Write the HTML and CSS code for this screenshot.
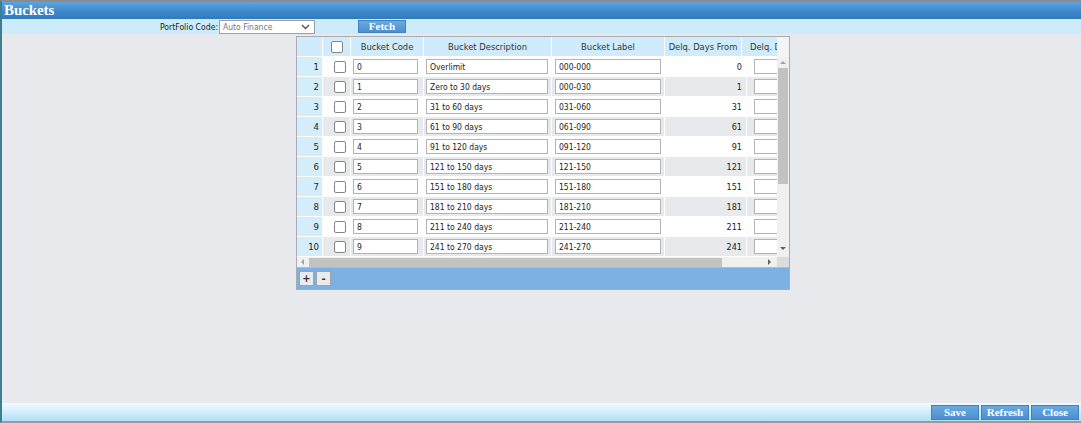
FILE: index.html
```html
<!DOCTYPE html>
<html>
<head>
<meta charset="utf-8">
<link rel="stylesheet" href="styles.css">
</head>
<body>
<div class="window">
  <div class="titlebar">Buckets</div>
  <div class="toolbar">
    <label class="tb-label">PortFolio Code:</label>
    <div class="select"><span>Auto Finance</span>
      <svg class="chev" width="9" height="6" viewBox="0 0 9 6"><path d="M1 1 L4.5 4.5 L8 1" fill="none" stroke="#555" stroke-width="1.4"/></svg>
    </div>
    <button class="btn fetch">Fetch</button>
  </div>
  <div class="content">
    <div class="grid">
      <div class="view">
        <div class="tablearea">
          <div class="row head">
            <div class="c rn"></div>
            <div class="c cb"><span class="chk"></span></div>
            <div class="c code">Bucket Code</div>
            <div class="c desc">Bucket Description</div>
            <div class="c lbl">Bucket Label</div>
            <div class="c from">Delq. Days From</div>
            <div class="c to">Delq. Days To</div>
          </div>
          <div class="body">
            <div class="row">
              <div class="c rn">1</div><div class="c cb"><span class="chk"></span></div>
              <div class="c code"><input class="inp" value="0"></div>
              <div class="c desc"><input class="inp" value="Overlimit"></div>
              <div class="c lbl"><input class="inp" value="000-000"></div>
              <div class="c from">0</div><div class="c to"><input class="inp"></div>
            </div>
            <div class="row alt">
              <div class="c rn">2</div><div class="c cb"><span class="chk"></span></div>
              <div class="c code"><input class="inp" value="1"></div>
              <div class="c desc"><input class="inp" value="Zero to 30 days"></div>
              <div class="c lbl"><input class="inp" value="000-030"></div>
              <div class="c from">1</div><div class="c to"><input class="inp"></div>
            </div>
            <div class="row">
              <div class="c rn">3</div><div class="c cb"><span class="chk"></span></div>
              <div class="c code"><input class="inp" value="2"></div>
              <div class="c desc"><input class="inp" value="31 to 60 days"></div>
              <div class="c lbl"><input class="inp" value="031-060"></div>
              <div class="c from">31</div><div class="c to"><input class="inp"></div>
            </div>
            <div class="row alt">
              <div class="c rn">4</div><div class="c cb"><span class="chk"></span></div>
              <div class="c code"><input class="inp" value="3"></div>
              <div class="c desc"><input class="inp" value="61 to 90 days"></div>
              <div class="c lbl"><input class="inp" value="061-090"></div>
              <div class="c from">61</div><div class="c to"><input class="inp"></div>
            </div>
            <div class="row">
              <div class="c rn">5</div><div class="c cb"><span class="chk"></span></div>
              <div class="c code"><input class="inp" value="4"></div>
              <div class="c desc"><input class="inp" value="91 to 120 days"></div>
              <div class="c lbl"><input class="inp" value="091-120"></div>
              <div class="c from">91</div><div class="c to"><input class="inp"></div>
            </div>
            <div class="row alt">
              <div class="c rn">6</div><div class="c cb"><span class="chk"></span></div>
              <div class="c code"><input class="inp" value="5"></div>
              <div class="c desc"><input class="inp" value="121 to 150 days"></div>
              <div class="c lbl"><input class="inp" value="121-150"></div>
              <div class="c from">121</div><div class="c to"><input class="inp"></div>
            </div>
            <div class="row">
              <div class="c rn">7</div><div class="c cb"><span class="chk"></span></div>
              <div class="c code"><input class="inp" value="6"></div>
              <div class="c desc"><input class="inp" value="151 to 180 days"></div>
              <div class="c lbl"><input class="inp" value="151-180"></div>
              <div class="c from">151</div><div class="c to"><input class="inp"></div>
            </div>
            <div class="row alt">
              <div class="c rn">8</div><div class="c cb"><span class="chk"></span></div>
              <div class="c code"><input class="inp" value="7"></div>
              <div class="c desc"><input class="inp" value="181 to 210 days"></div>
              <div class="c lbl"><input class="inp" value="181-210"></div>
              <div class="c from">181</div><div class="c to"><input class="inp"></div>
            </div>
            <div class="row">
              <div class="c rn">9</div><div class="c cb"><span class="chk"></span></div>
              <div class="c code"><input class="inp" value="8"></div>
              <div class="c desc"><input class="inp" value="211 to 240 days"></div>
              <div class="c lbl"><input class="inp" value="211-240"></div>
              <div class="c from">211</div><div class="c to"><input class="inp"></div>
            </div>
            <div class="row alt">
              <div class="c rn">10</div><div class="c cb"><span class="chk"></span></div>
              <div class="c code"><input class="inp" value="9"></div>
              <div class="c desc"><input class="inp" value="241 to 270 days"></div>
              <div class="c lbl"><input class="inp" value="241-270"></div>
              <div class="c from">241</div><div class="c to"><input class="inp"></div>
            </div>
          </div>
        </div>
        <div class="vcol">
          <div class="vhead"></div>
          <div class="vscroll">
            <div class="arr up"></div>
            <div class="vthumb"></div>
            <div class="vspace"></div>
            <div class="arr down"></div>
          </div>
        </div>
      </div>
      <div class="hbar">
        <div class="hscroll">
          <div class="arr left"></div>
          <div class="hthumb"></div>
          <div class="hspace"></div>
          <div class="arr right"></div>
        </div>
        <div class="corner"></div>
      </div>
      <div class="pager">
        <button class="pbtn">+</button>
        <button class="pbtn">-</button>
      </div>
    </div>
  </div>
  <div class="footer">
    <button class="btn fbtn">Save</button>
    <button class="btn fbtn">Refresh</button>
    <button class="btn fbtn">Close</button>
  </div>
</div>
</body>
</html>
```

FILE: styles.css
```css
* { box-sizing: border-box; }
html, body { margin: 0; padding: 0; }
body {
  width: 1081px;
  height: 423px;
  overflow: hidden;
  font-family: "DejaVu Sans Condensed", "DejaVu Sans", sans-serif;
  background: #e7e9ed;
}
.window {
  height: 423px;
  display: flex;
  flex-direction: column;
  border-top: 2px solid #8c8c8c;
  border-bottom: 2px solid #9a9a9a;
  border-left: 2px solid #3d7e92;
}
.titlebar {
  height: 17px;
  background: linear-gradient(#5ea3dd, #3a86c8 60%, #2f7bbd);
  color: #fff;
  font-family: "Liberation Serif", serif;
  font-weight: bold;
  font-size: 15px;
  line-height: 17px;
  padding-left: 2px;
  letter-spacing: -0.1px;
}
.toolbar {
  height: 15px;
  background: #ccecfb;
  display: flex;
  align-items: center;
  color: #222;
}
.tb-label {
  width: 217px;
  text-align: right;
  font-size: 8.6px;
  padding-right: 1px;
}
.select {
  width: 96px;
  height: 14px;
  border: 1px solid #9aa0a6;
  background: #fff;
  display: flex;
  align-items: center;
  justify-content: space-between;
  padding: 0 4px 0 3px;
  color: #777;
  font-size: 8.5px;
}
.chev { display: block; }
.btn {
  margin: 0;
  padding: 0;
  color: #fff;
  font-family: "Liberation Serif", serif;
  font-weight: bold;
  font-size: 11px;
  background: linear-gradient(#6aaae0, #4a8fd0);
  border: 1px solid #3f83c4;
}
.fetch {
  width: 48px;
  height: 13px;
  margin-left: 43px;
  line-height: 11px;
}
.content {
  flex: 1;
  padding: 2px 0 0 294px;
  background: #e7e9ed;
}
.grid {
  width: 494px;
  border: 1px solid #a9adb2;
  background: #eeeeee;
}
.view { display: flex; }
.tablearea { width: 480px; overflow: hidden; background: #fff; }
.row {
  display: flex;
  height: 20px;
  width: 560px;
  border-bottom: 1px solid #fff;
  background: #fff;
  font-size: 8.5px;
  color: #222;
}
.row.alt { background: #e7e9ed; }
.row.head { background: #d0ebfb; color: #333; font-size: 9.3px; }
.c {
  flex: none;
  height: 100%;
  border-right: 1px solid #fff;
  display: flex;
  align-items: center;
  justify-content: center;
  overflow: hidden;
  white-space: nowrap;
}
.rn { width: 26px; justify-content: flex-end; padding-right: 3px; background: #d4edfb; font-size: 9.5px; }
.head .rn { background: #d0ebfb; }
.cb { width: 28px; justify-content: flex-start; padding-left: 11px; }
.head .cb { padding-left: 11px; justify-content: flex-start; }
.code { width: 73px; justify-content: flex-start; padding-left: 2px; }
.desc { width: 128px; justify-content: flex-start; padding-left: 2px; }
.lbl { width: 113px; justify-content: flex-start; padding-left: 3px; }
.from { width: 82px; justify-content: flex-end; padding-right: 4px; font-size: 9px; }
.to { width: 80px; justify-content: flex-start; padding-left: 7px; }
.head .c { justify-content: center; padding: 0; }
.head .from { width: 77px; font-size: 9.3px; }
.head .to { justify-content: flex-start; padding-left: 8px; }
.chk {
  width: 12px;
  height: 12px;
  border: 1px solid #858585;
  border-radius: 2px;
  background: #fff;
  display: block;
}
.inp {
  height: 15px;
  border: 1px solid #b3b3b3;
  background: #fff;
  font-family: "DejaVu Sans Condensed", "DejaVu Sans", sans-serif;
  font-size: 8.5px;
  color: #222;
  padding: 0 3px;
  margin: 0;
  outline: none;
}
.code .inp { width: 65px; }
.desc .inp { width: 122px; }
.lbl .inp { width: 106px; }
.to .inp { width: 30px; }
.vcol { width: 12px; display: flex; flex-direction: column; background: #f0f0f0; }
.vhead { height: 20px; background: #f4f4f4; }
.vscroll { flex: 1; display: flex; flex-direction: column; align-items: center; background: #f0f0f0; }
.vthumb { width: 10px; height: 116px; background: #c2c2c2; }
.vspace { flex: 1; }
.arr { width: 0; height: 0; border: 3px solid transparent; }
.arr.up { border-bottom-color: #a3a3a3; border-top-width: 0; margin: 4px 0 4px; }
.arr.down { border-top-color: #606060; border-bottom-width: 0; margin: 0 0 7px; }
.hbar { display: flex; height: 10px; }
.hscroll { width: 480px; display: flex; align-items: center; background: #f0f0f0; }
.arr.left { border-right-color: #a3a3a3; border-left-width: 0; margin: 0 5px 0 4px; }
.arr.right { border-left-color: #606060; border-right-width: 0; margin: 0 6px 0 4px; }
.hthumb { width: 413px; height: 9px; background: #c2c2c2; }
.hspace { flex: 1; }
.corner { flex: 1; background: #dcdcdc; }
.pager {
  height: 22px;
  border-top: 1px solid #9cc3e6;
  background: #7bb1e3;
  display: flex;
  align-items: center;
  gap: 2px;
  padding-left: 2px;
}
.pbtn {
  width: 15px;
  height: 15px;
  margin: 0;
  padding: 0;
  border: 1px solid #9ba3ab;
  background: #ebebeb;
  font-family: "DejaVu Sans", sans-serif;
  font-weight: bold;
  font-size: 10px;
  line-height: 12px;
  color: #333;
}
.footer {
  height: 18px;
  background: linear-gradient(#f3fcff, #d8f1fd 40%, #b4def5);
  display: flex;
  justify-content: flex-end;
  align-items: center;
  gap: 2px;
  padding-right: 2px;
}
.fbtn {
  width: 48px;
  height: 15px;
  line-height: 13px;
}
```
